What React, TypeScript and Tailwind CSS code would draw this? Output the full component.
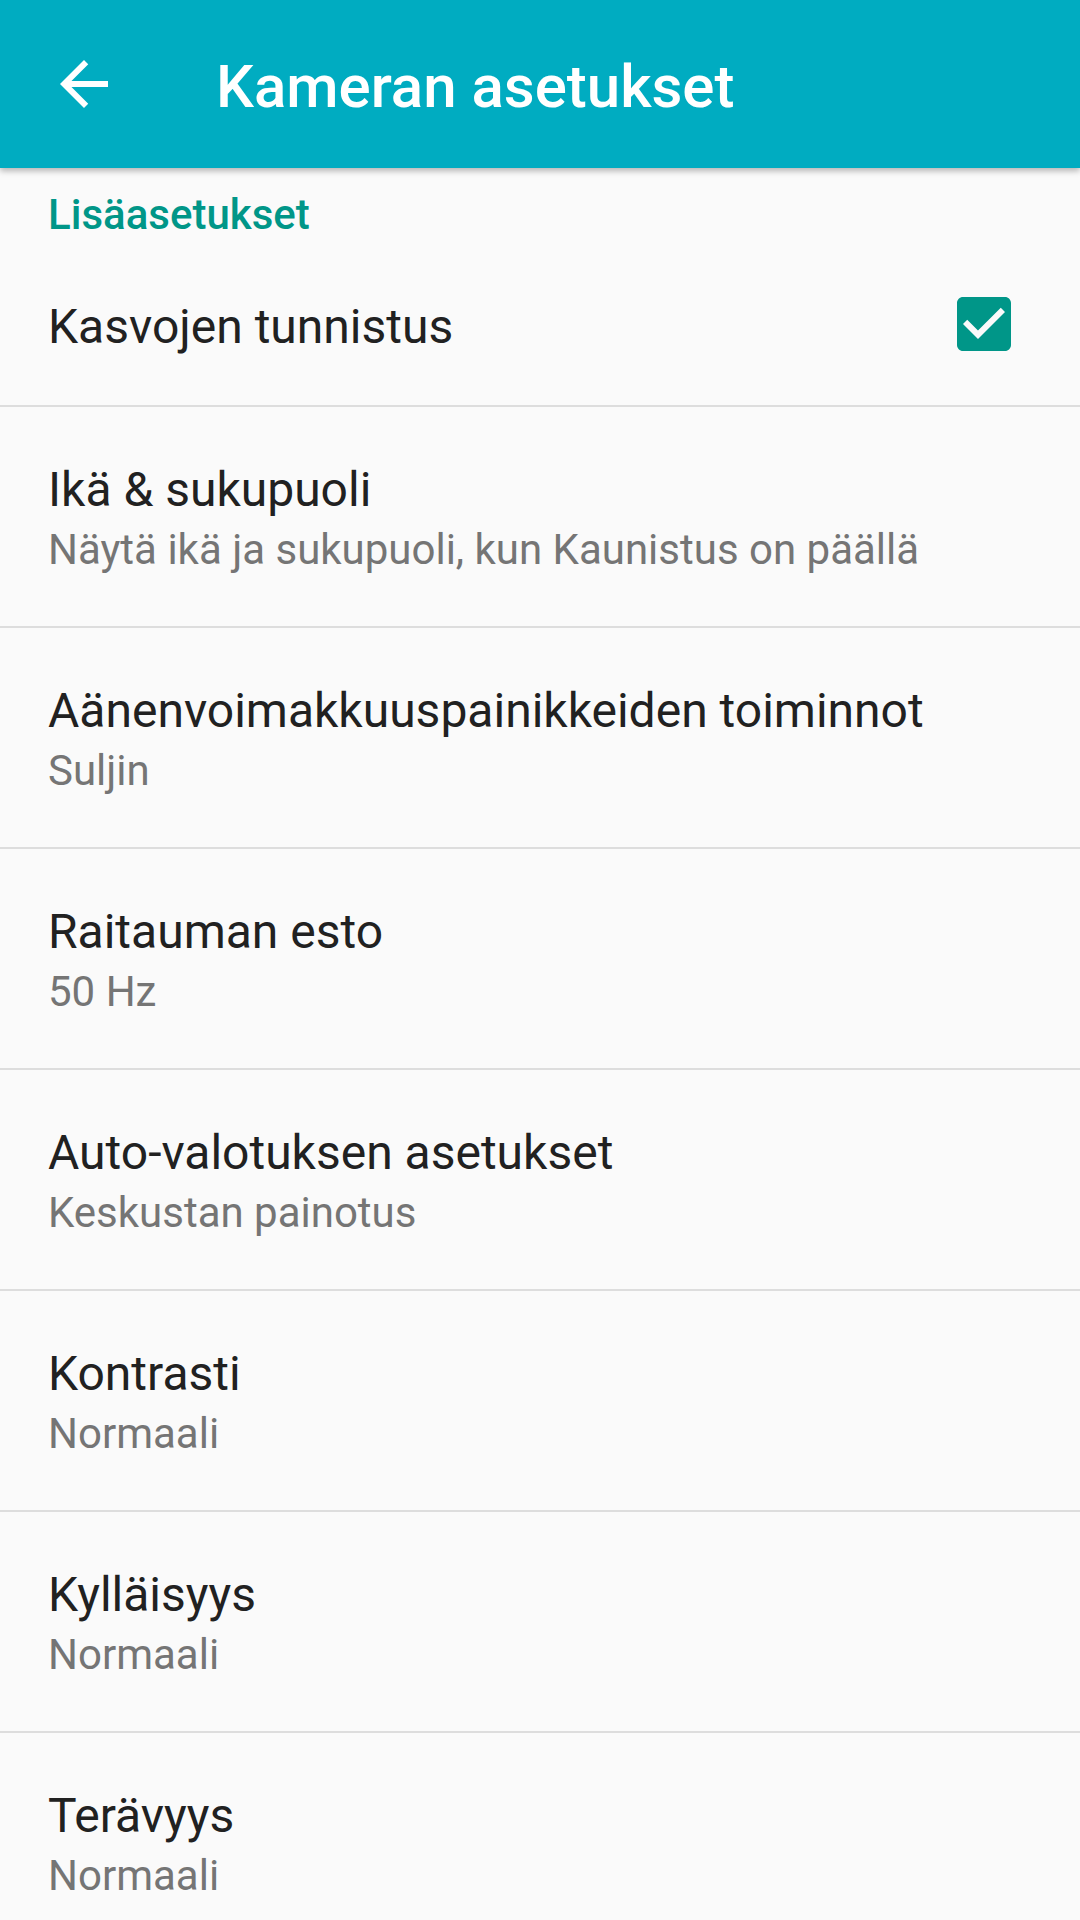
const rows: { title: string; summary: string }[] = [
  { title: "Ikä & sukupuoli", summary: "Näytä ikä ja sukupuoli, kun Kaunistus on päällä" },
  { title: "Aänenvoimakkuuspainikkeiden toiminnot", summary: "Suljin" },
  { title: "Raitauman esto", summary: "50 Hz" },
  { title: "Auto-valotuksen asetukset", summary: "Keskustan painotus" },
  { title: "Kontrasti", summary: "Normaali" },
  { title: "Kylläisyys", summary: "Normaali" },
  { title: "Terävyys", summary: "Normaali" },
];

function BackArrow() {
  return (
    <svg viewBox="0 0 24 24" className="h-[72px] w-[72px]" fill="#ffffff">
      <path d="M20 11H7.83l5.59-5.59L12 4l-8 8 8 8 1.41-1.41L7.83 13H20v-2z" />
    </svg>
  );
}

function CheckedBox() {
  return (
    <svg viewBox="0 0 24 24" className="h-[72px] w-[72px]" fill="#009688">
      <path d="M19 3H5c-1.11 0-2 .9-2 2v14c0 1.1.89 2 2 2h14c1.11 0 2-.9 2-2V5c0-1.1-.89-2-2-2zm-9 14l-5-5 1.41-1.41L10 14.17l7.59-7.59L19 8l-9 9z" />
    </svg>
  );
}

export default function App() {
  return (
    <div
      className="h-[1920px] w-[1080px] overflow-hidden bg-[#fafafa]"
      style={{ fontFamily: "Roboto, 'Noto Sans', sans-serif" }}
    >
      <header className="relative z-10 flex h-[168px] items-center bg-[#00acc1] shadow-[0_3px_6px_rgba(0,0,0,0.28)]">
        <div className="ml-[48px] flex h-[72px] w-[72px] items-center justify-center">
          <BackArrow />
        </div>
        <h1 className="ml-[96px] mt-[5px] text-[60px] font-medium leading-[60px] text-white">
          Kameran asetukset
        </h1>
      </header>

      <main>
        <div className="h-[75px] pl-[48px] pt-[26px]">
          <p className="text-[42px] font-medium leading-[42px] text-[#009688]">Lisäasetukset</p>
        </div>

        <div className="flex h-[164px] items-center justify-between border-b-2 border-[#dddddd] pl-[48px] pr-[60px]">
          <p className="mt-[5px] text-[48px] leading-[48px] text-[#212121]">Kasvojen tunnistus</p>
          <CheckedBox />
        </div>

        {rows.map((row) => (
          <div
            key={row.title}
            className="h-[221px] border-b-2 border-[#dddddd] pl-[48px] pr-[48px] pt-[59px]"
          >
            <p className="text-[48px] leading-[48px] text-[#212121]">{row.title}</p>
            <p className="mt-[15px] text-[42px] leading-[42px] text-[#757575]">{row.summary}</p>
          </div>
        ))}
      </main>
    </div>
  );
}
